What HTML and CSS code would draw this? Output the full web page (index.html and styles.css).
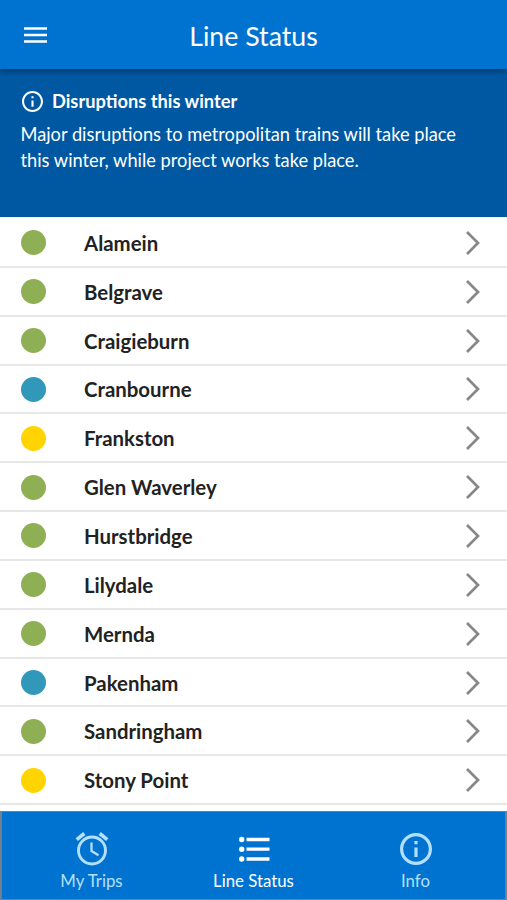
FILE: index.html
```html
<!DOCTYPE html>
<html lang="en">
<head>
    <meta charset="utf-8">
    <title>Line Status</title>
    <link rel="stylesheet" href="styles.css">
</head>
<body>
    <!-- Shared icons -->
    <svg width="0" height="0" class="sprite">
        <symbol id="chevron" viewBox="0 0 16 26">
            <path d="M2 2l11 11L2 24" fill="none" stroke="#878787" stroke-width="2.700"/>
        </symbol>
        <symbol id="info" viewBox="2 2 20 20">
            <path fill="currentColor" d="M11 7h2v2h-2zm0 4h2v6h-2zm1-9C6.480 2 2 6.480 2 12s4.480 10 10 10 10-4.480 10-10S17.520 2 12 2zm0 18c-4.410 0-8-3.590-8-8s3.590-8 8-8 8 3.590 8 8-3.590 8-8 8z"/>
        </symbol>
    </svg>

    <div class="app">
        <div class="header">
            <svg class="menu" viewBox="0 0 23 16">
                <path d="M0 1.500h23M0 8h23M0 14.500h23" stroke="#fff" stroke-width="2.500"/>
            </svg>
            <h1>Line Status</h1>
        </div>

        <div class="banner">
            <h2><svg class="banner-icon"><use href="#info"/></svg>Disruptions this winter</h2>
            <p>Major disruptions to metropolitan trains will take place<br>this winter, while project works take place.</p>
        </div>

        <ul class="lines">
            <li><span class="dot good"></span><span class="name">Alamein</span><svg class="chevron"><use href="#chevron"/></svg></li>
            <li><span class="dot good"></span><span class="name">Belgrave</span><svg class="chevron"><use href="#chevron"/></svg></li>
            <li><span class="dot good"></span><span class="name">Craigieburn</span><svg class="chevron"><use href="#chevron"/></svg></li>
            <li><span class="dot works"></span><span class="name">Cranbourne</span><svg class="chevron"><use href="#chevron"/></svg></li>
            <li><span class="dot minor"></span><span class="name">Frankston</span><svg class="chevron"><use href="#chevron"/></svg></li>
            <li><span class="dot good"></span><span class="name">Glen Waverley</span><svg class="chevron"><use href="#chevron"/></svg></li>
            <li><span class="dot good"></span><span class="name">Hurstbridge</span><svg class="chevron"><use href="#chevron"/></svg></li>
            <li><span class="dot good"></span><span class="name">Lilydale</span><svg class="chevron"><use href="#chevron"/></svg></li>
            <li><span class="dot good"></span><span class="name">Mernda</span><svg class="chevron"><use href="#chevron"/></svg></li>
            <li><span class="dot works"></span><span class="name">Pakenham</span><svg class="chevron"><use href="#chevron"/></svg></li>
            <li><span class="dot good"></span><span class="name">Sandringham</span><svg class="chevron"><use href="#chevron"/></svg></li>
            <li><span class="dot minor"></span><span class="name">Stony Point</span><svg class="chevron"><use href="#chevron"/></svg></li>
        </ul>

        <div class="tabs">
            <div class="tab">
                <svg width="34" height="34" viewBox="0 0 34 34" fill="none" stroke="currentColor">
                    <circle cx="17" cy="18.500" r="13.500" stroke-width="2.900"/>
                    <path d="M16.500 10.500v8.500l7 4.300" stroke-width="2.300"/>
                    <path d="M1.700 7.600l7.600-6.100M32.300 7.600l-7.600-6.100" stroke-width="3.600"/>
                </svg>
                <span>My Trips</span>
            </div>
            <div class="tab active">
                <svg width="34" height="34" viewBox="0 0 34 34">
                    <path d="M9.500 7.500h23M9.500 17.200h23M9.500 27h23" stroke="currentColor" stroke-width="3.300"/>
                    <g fill="currentColor">
                        <circle cx="4.700" cy="7.500" r="2.700"/>
                        <circle cx="4.700" cy="17.200" r="2.700"/>
                        <circle cx="4.700" cy="27" r="2.700"/>
                    </g>
                </svg>
                <span>Line Status</span>
            </div>
            <div class="tab">
                <svg width="34" height="34"><use href="#info" x="1" y="1" width="32" height="32"/></svg>
                <span>Info</span>
            </div>
        </div>
    </div>
</body>
</html>
```

FILE: styles.css
```css
body {
    margin: 0;
    font-family: Lato, sans-serif;
    background-color: #fff;
    overflow: hidden;
}
.sprite {
    display: block;
}
.app {
    display: flex;
    flex-direction: column;
    height: 900px;
}
.header {
    display: grid;
    grid-template-columns: 100px 1fr 100px;
    align-items: center;
    flex: none;
    height: 69px;
    background-color: #0073d0;
    color: #fff;
    box-shadow: 0 2px 6px rgba(0,0,0,0.4);
    z-index: 1;
}
.menu {
    width: 23px;
    height: 16px;
    margin-left: 24px;
}
.header h1 {
    margin: 3px 0 0;
    font-size: 26.7px;
    line-height: 32px;
    font-weight: 400;
    text-align: center;
    white-space: nowrap;
}
.banner {
    flex: none;
    box-sizing: border-box;
    height: 148px;
    padding: 20px 20px 0 20.5px;
    background-color: #0058a2;
    color: #fff;
}
.banner h2 {
    display: flex;
    align-items: center;
    gap: 9px;
    margin: 0;
    font-size: 18.25px;
    line-height: 24px;
}
.banner-icon {
    width: 21px;
    height: 21px;
    margin-left: 1.5px;
}
.banner p {
    margin: 8px 0 0;
    font-size: 18.25px;
    line-height: 26px;
    white-space: nowrap;
}
.lines {
    flex: none;
    margin: 0;
    padding: 2px 0 0;
    list-style: none;
}
.lines li {
    display: flex;
    align-items: center;
    box-sizing: border-box;
    height: 48.85px;
    padding: 1px 26px 0 20.5px;
    border-bottom: 2px solid #e7e7e7;
}
.dot {
    width: 25px;
    height: 25px;
    border-radius: 50%;
}
.good {
    background-color: #8faf54;
}
.works {
    background-color: #3198b9;
}
.minor {
    background-color: #ffd400;
}
.name {
    flex: 1;
    margin-left: 38.5px;
    font-size: 20.4px;
    line-height: 26px;
    font-weight: 700;
    color: #222;
}
.chevron {
    width: 16px;
    height: 26px;
}
.tabs {
    display: grid;
    grid-template-columns: repeat(3, 162px);
    justify-content: center;
    box-sizing: border-box;
    height: 89px;
    margin-top: auto;
    border: 1px solid #71808e;
    border-width: 1px 2px;
    background-color: #0073d0;
    color: #b3e0ff;
}
.tab {
    display: flex;
    flex-direction: column;
    align-items: center;
    padding-top: 20px;
    font-size: 16.8px;
    line-height: 30px;
}
.active {
    color: #fff;
}
```
